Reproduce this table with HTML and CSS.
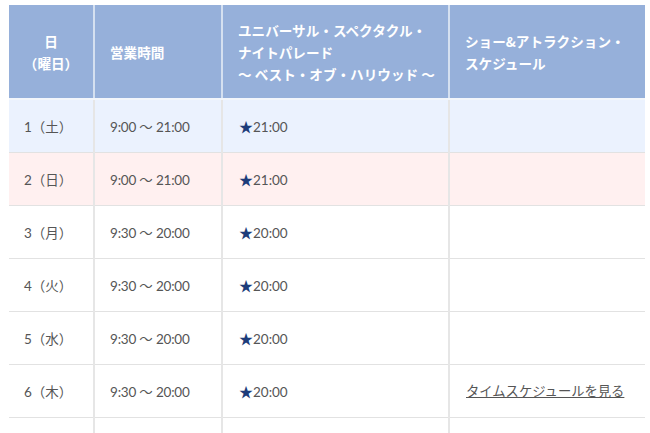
FILE: index.html
```html
<!DOCTYPE html>
<html lang="ja">
<head>
<meta charset="utf-8">
<title>営業時間</title>
<link rel="stylesheet" href="styles.css">
</head>
<body>
<div class="wrap">
<table class="schedule">
  <colgroup>
    <col class="c-day">
    <col class="c-hours">
    <col class="c-parade">
    <col class="c-show">
  </colgroup>
  <thead>
    <tr>
      <th class="center">日<br>（曜日）</th>
      <th>営業時間</th>
      <th>ユニバーサル・スペクタクル・<br>ナイトパレード<br>～ ベスト・オブ・ハリウッド ～</th>
      <th>ショー&amp;アトラクション・<br>スケジュール</th>
    </tr>
  </thead>
  <tbody>
    <tr class="sat"><td>1（土）</td><td>9:00 ～ 21:00</td><td><span class="star">★</span>21:00</td><td></td></tr>
    <tr class="sun"><td>2（日）</td><td>9:00 ～ 21:00</td><td><span class="star">★</span>21:00</td><td></td></tr>
    <tr><td>3（月）</td><td>9:30 ～ 20:00</td><td><span class="star">★</span>20:00</td><td></td></tr>
    <tr><td>4（火）</td><td>9:30 ～ 20:00</td><td><span class="star">★</span>20:00</td><td></td></tr>
    <tr><td>5（水）</td><td>9:30 ～ 20:00</td><td><span class="star">★</span>20:00</td><td></td></tr>
    <tr><td>6（木）</td><td>9:30 ～ 20:00</td><td><span class="star">★</span>20:00</td><td><a href="#" class="link">タイムスケジュールを見る</a></td></tr>
    <tr class="cut"><td></td><td></td><td></td><td></td></tr>
  </tbody>
</table>
</div>
</body>
</html>
```
FILE: styles.css
```css
html, body {
  margin: 0;
  padding: 0;
  background: #ffffff;
}
.wrap {
  padding: 5px 5px 0 9px;
  overflow: hidden;
  height: 428px;
}
.schedule {
  border-collapse: collapse;
  table-layout: fixed;
  width: 636px;
  font-family: Lato, "Noto Sans CJK JP", sans-serif;
  font-size: 13.5px;
  color: #555555;
}
.c-day { width: 85px; }
.c-hours { width: 128px; }
.c-parade { width: 227px; }
.c-show { width: 196px; }
.schedule th {
  background: #96b0da;
  color: #ffffff;
  font-weight: bold;
  text-align: left;
  line-height: 22px;
  height: 94px;
  box-sizing: border-box;
  padding: 0 10px 0 15px;
  border-left: 2px solid #d5e0f0;
  border-bottom: 2px solid #f3f6fb;
  vertical-align: middle;
  font-family: "Noto Sans CJK JP", sans-serif;
  font-size: 13.6px;
}
.schedule th:first-child { border-left: none; }
.schedule th.center { text-align: center; padding: 0; }
.schedule td {
  height: 53px;
  box-sizing: border-box;
  padding: 0 10px 0 15px;
  border-left: 2px solid #e6e6e6;
  border-bottom: 1px solid #e2e2e2;
  vertical-align: middle;
  white-space: nowrap;
}
.schedule td:first-child { border-left: none; }
.schedule td:nth-child(2) { padding-left: 15px; letter-spacing: -0.2px; }
.schedule td:nth-child(3),
.schedule td:nth-child(4) { padding-left: 16px; }
.sat td { background: #ebf2fe; }
.sun td { background: #fff0f0; }
.star {
  color: #1d3c7a;
  font-family: "Noto Sans CJK JP", sans-serif;
  font-size: 14px;
  margin-right: 0;
}
.link {
  color: #555555;
  text-decoration: underline;
  font-family: "Noto Sans CJK JP", sans-serif;
  font-size: 13.3px;
}
```
